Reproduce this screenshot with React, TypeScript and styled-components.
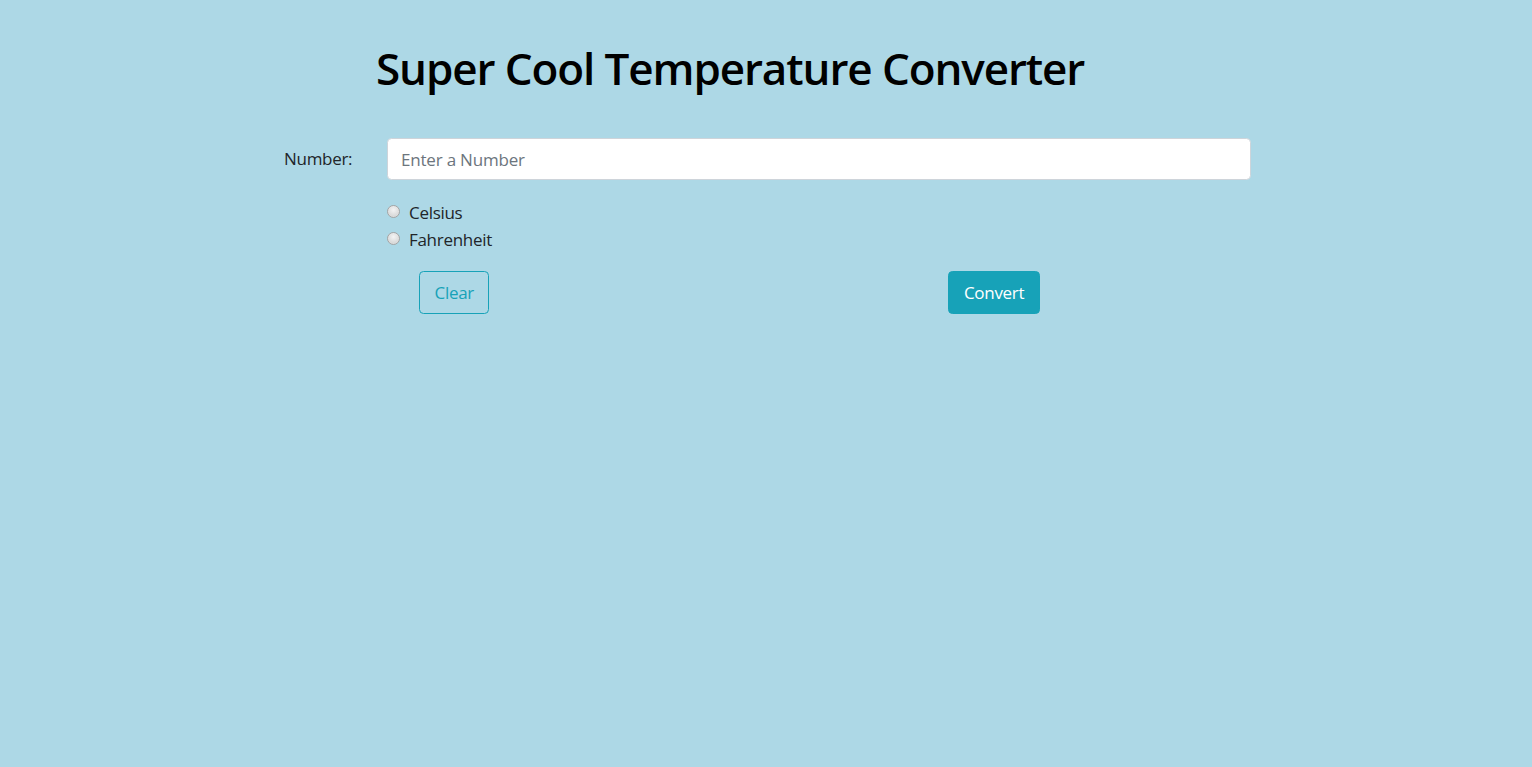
import React from "react";
import styled, { createGlobalStyle } from "styled-components";

const Global = createGlobalStyle`
  html, body {
    margin: 0;
    padding: 0;
  }
  body {
    background: #add8e6;
    font-family: "Open Sans", "Noto Sans", sans-serif;
    font-size: 18px;
    line-height: 1.5;
    color: #212529;
    min-height: 100vh;
  }
`;

const Page = styled.div`
  width: 1140px;
  margin: 0 auto;
  padding-top: 41px;
`;

const Title = styled.h1`
  margin: 0 0 43px 180px;
  height: 54px;
  font-size: 44px;
  font-weight: 600;
  line-height: 54px;
  color: #000;
  letter-spacing: -1.1px;
`;

const Form = styled.form`
  display: grid;
  grid-template-columns: 103px 864px;
  padding-left: 88px;
`;

const Label = styled.label`
  align-self: center;
  font-size: 17px;
  letter-spacing: -0.3px;
`;

const Input = styled.input`
  box-sizing: border-box;
  height: 42px;
  width: 100%;
  padding: 6px 13px;
  font-family: inherit;
  font-size: 17px;
  color: #495057;
  background: #fff;
  border: 1px solid #ced4da;
  border-radius: 4.5px;
  outline: none;
  &::placeholder {
    color: #6c757d;
    letter-spacing: -0.2px;
  }
`;

const Options = styled.div`
  grid-column: 2;
  display: flex;
  flex-direction: column;
  margin-top: 19px;
`;

const Check = styled.label`
  display: flex;
  align-items: center;
  height: 27px;
  font-size: 17px;
  letter-spacing: -0.3px;
  color: #212529;
`;

const Radio = styled.input`
  appearance: none;
  box-sizing: border-box;
  width: 13px;
  height: 13px;
  margin: -3px 9px 0 0;
  border-radius: 50%;
  border: 1px solid #a4a4a4;
  background: radial-gradient(circle at 50% 35%, #f4f4f4 0%, #dcdcdc 60%, #cfcfcf 100%);
  box-shadow: inset 0 0 1px rgba(255, 255, 255, 0.8);
`;

const Actions = styled.div`
  grid-column: 2;
  display: flex;
  align-items: center;
  gap: 459px;
  margin-top: 18px;
  padding-left: 32px;
`;

const Button = styled.button<{ $solid?: boolean }>`
  box-sizing: border-box;
  height: 43px;
  padding: 0 14.5px;
  font-family: inherit;
  font-size: 17px;
  letter-spacing: -0.3px;
  border-radius: 4.5px;
  border: 1px solid #17a2b8;
  cursor: pointer;
  color: ${(p) => (p.$solid ? "#fff" : "#17a2b8")};
  background: ${(p) => (p.$solid ? "#17a2b8" : "transparent")};
`;

export default function App() {
  return (
    <>
      <Global />
      <Page>
        <Title>Super Cool Temperature Converter</Title>
        <Form onSubmit={(e) => e.preventDefault()}>
          <Label htmlFor="num">Number:</Label>
          <Input id="num" type="text" placeholder="Enter a Number" />
          <Options>
            <Check>
              <Radio type="radio" name="unit" value="c" />
              Celsius
            </Check>
            <Check>
              <Radio type="radio" name="unit" value="f" />
              Fahrenheit
            </Check>
          </Options>
          <Actions>
            <Button type="button">Clear</Button>
            <Button type="submit" $solid>
              Convert
            </Button>
          </Actions>
        </Form>
      </Page>
    </>
  );
}
